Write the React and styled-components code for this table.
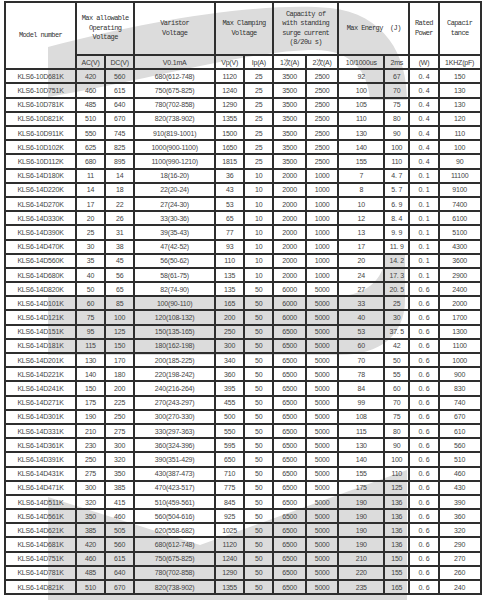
import React from "react";
import styled, { createGlobalStyle } from "styled-components";

const Global = createGlobalStyle`
  html, body { margin: 0; padding: 0; background: #fff; }
  body { width: 487px; height: 600px; overflow: hidden; }
`;

const Page = styled.div`
  position: relative;
  width: 487px;
  height: 600px;
  padding: 1px 0 0 4px;
  box-sizing: border-box;
  color: #3a3a3a;
`;

const Watermark = styled.svg`
  position: absolute;
  left: 0;
  top: 0;
  width: 487px;
  height: 600px;
  z-index: 0;
  pointer-events: none;
`;

const Sheet = styled.div`
  position: relative;
  z-index: 1;
  display: grid;
  grid-template-columns: 71px 29px 29.3px 80.7px 29.3px 29px 32.7px 32.3px 46px 25px 29.4px 42px;
  grid-template-rows: 53px 14.3px repeat(37, 14.2px);
  width: max-content;
  border-left: 2px solid #2e2e2e;
  border-top: 2px solid #2e2e2e;
`;

const Cell = styled.div`
  box-sizing: border-box;
  border-right: 2px solid #2e2e2e;
  border-bottom: 2px solid #2e2e2e;
  display: flex;
  align-items: center;
  justify-content: center;
  text-align: center;
  overflow: hidden;
  white-space: pre;
  font-family: "Liberation Sans", "Noto Sans CJK SC", sans-serif;
  font-size: 7px;
  letter-spacing: -0.2px;
  line-height: 1;
  grid-column: ${(p) => (p.$cols ? `span ${p.$cols}` : "auto")};
  grid-row: ${(p) => (p.$rows ? `span ${p.$rows}` : "auto")};
`;

const HeadCell = styled(Cell)`
  font-family: "Liberation Mono", "Noto Sans CJK SC", monospace;
  font-size: 7px;
  letter-spacing: -0.6px;
  line-height: 9.4px;
  color: #333;
`;

const SubCell = styled(Cell)`
  padding-top: 1px;
`;

const DataCell = styled(Cell)`
  color: #444;
`;

const heads = [
  { t: "Model number", rows: 2 },
  { t: "Max allowable\nOperating\nVoltage", cols: 2 },
  { t: "Varistor\nVoltage" },
  { t: "Max Clamping\nVoltage", cols: 2 },
  { t: "Capacity of\nwith standing\nsurge current\n(8/20u s)", cols: 2 },
  { t: "Max Energy  (J)", cols: 2 },
  { t: "Rated\nPower" },
  { t: "Capacir\ntance" },
];

const subs = ["AC(V)", "DC(V)", "V0.1mA", "Vp(V)", "Ip(A)", "1次(A)", "2次(A)", "10/1000us", "2ms", "(W)", "1KHZ(pF)"];

const raw = `10D681K 420 560 680(612-748) 1120 25 3500 2500 92 67 0.4 150
10D751K 460 615 750(675-825) 1240 25 3500 2500 100 70 0.4 130
10D781K 485 640 780(702-858) 1290 25 3500 2500 105 75 0.4 130
10D821K 510 670 820(738-902) 1355 25 3500 2500 110 80 0.4 120
10D911K 550 745 910(819-1001) 1500 25 3500 2500 130 90 0.4 110
10D102K 625 825 1000(900-1100) 1650 25 3500 2500 140 100 0.4 100
10D112K 680 895 1100(990-1210) 1815 25 3500 2500 155 110 0.4 90
14D180K 11 14 18(16-20) 36 10 2000 1000 7 4.7 0.1 11100
14D220K 14 18 22(20-24) 43 10 2000 1000 8 5.7 0.1 9100
14D270K 17 22 27(24-30) 53 10 2000 1000 10 6.9 0.1 7400
14D330K 20 26 33(30-36) 65 10 2000 1000 12 8.4 0.1 6100
14D390K 25 31 39(35-43) 77 10 2000 1000 13 9.9 0.1 5100
14D470K 30 38 47(42-52) 93 10 2000 1000 17 11.9 0.1 4300
14D560K 35 45 56(50-62) 110 10 2000 1000 20 14.2 0.1 3600
14D680K 40 56 58(61-75) 135 10 2000 1000 24 17.3 0.1 2900
14D820K 50 65 82(74-90) 135 50 6000 5000 27 20.5 0.6 2400
14D101K 60 85 100(90-110) 165 50 6000 5000 33 25 0.6 2000
14D121K 75 100 120(108-132) 200 50 6000 5000 40 30 0.6 1700
14D151K 95 125 150(135-165) 250 50 6500 5000 53 37.5 0.6 1300
14D181K 115 150 180(162-198) 300 50 6500 5000 60 42 0.6 1100
14D201K 130 170 200(185-225) 340 50 6500 5000 70 50 0.6 1000
14D221K 140 180 220(198-242) 360 50 6500 5000 78 55 0.6 900
14D241K 150 200 240(216-264) 395 50 6500 5000 84 60 0.6 830
14D271K 175 225 270(243-297) 455 50 6500 5000 99 70 0.6 740
14D301K 190 250 300(270-330) 500 50 6500 5000 108 75 0.6 670
14D331K 210 275 330(297-363) 550 50 6500 5000 115 80 0.6 610
14D361K 230 300 360(324-396) 595 50 6500 5000 130 90 0.6 560
14D391K 250 320 390(351-429) 650 50 6500 5000 140 100 0.6 510
14D431K 275 350 430(387-473) 710 50 6500 5000 155 110 0.6 460
14D471K 300 385 470(423-517) 775 50 6500 5000 175 125 0.6 430
14D511K 320 415 510(459-561) 845 50 6500 5000 190 136 0.6 390
14D561K 350 460 560(504-616) 925 50 6500 5000 190 136 0.6 360
14D621K 385 505 620(558-682) 1025 50 6500 5000 190 136 0.6 320
14D681K 420 560 680(612-748) 1120 50 6500 5000 190 136 0.6 290
14D751K 460 615 750(675-825) 1240 50 6500 5000 210 150 0.6 270
14D781K 485 640 780(702-858) 1290 50 6500 5000 220 155 0.6 260
14D821K 510 670 820(738-902) 1355 50 6500 5000 235 165 0.6 240`;

const fmt = (v) => (/^\d+\.\d+$/.test(v) ? v.replace(".", ". ") : v);

const rows = raw.split("\n").map((line) => {
  const parts = line.trim().split(" ");
  return ["KLS6-" + parts[0], ...parts.slice(1).map(fmt)];
});

const WM = "#dcdcdc";

function Logo() {
  return (
    <Watermark viewBox="0 0 487 600">
      <path
        fill={WM}
        d="M48,47 C150,20 260,2 330,8 C385,14 407,55 407,100 L370,100 C368,70 350,50 315,50 C250,50 150,80 48,97 Z"
      />
      <path
        fill={WM}
        d="M385,255 L405,255 L405,300 C405,335 380,355 340,355 L48,355 L48,297 L330,297 C365,297 385,280 385,255 Z"
      />
      <path fill={WM} d="M48,497 L200,545 L407,470 L407,600 L48,600 Z" />
    </Watermark>
  );
}

export default function App() {
  return (
    <>
      <Global />
      <Page>
        <Logo />
        <Sheet>
          {heads.map((h, i) => (
            <HeadCell key={"h" + i} $cols={h.cols} $rows={h.rows}>
              {h.t}
            </HeadCell>
          ))}
          {subs.map((s, i) => (
            <SubCell key={"s" + i}>{s}</SubCell>
          ))}
          {rows.map((r, ri) =>
            r.map((v, ci) => <DataCell key={ri + "-" + ci}>{v}</DataCell>)
          )}
        </Sheet>
      </Page>
    </>
  );
}
